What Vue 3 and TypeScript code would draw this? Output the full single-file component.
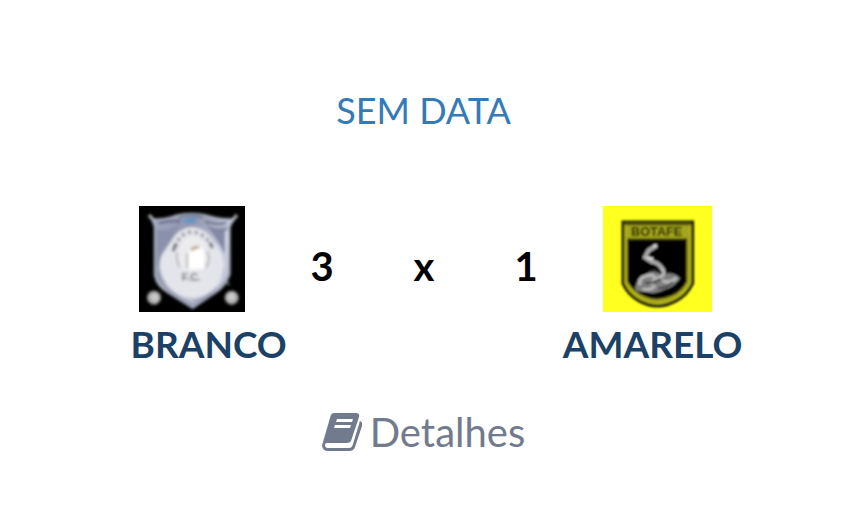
<script setup lang="ts">
interface Team {
  name: string
  goals: number
}

const date = 'SEM DATA'
const home: Team = { name: 'BRANCO', goals: 3 }
const away: Team = { name: 'AMARELO', goals: 1 }
</script>

<template>
  <main class="match">
    <h1 class="date">{{ date }}</h1>

    <section class="board">
      <svg class="crest-home" viewBox="27 25 318 318" role="img" :aria-label="home.name">
        <defs>
          <filter id="soft-home" x="-10%" y="-10%" width="120%" height="120%">
            <feGaussianBlur stdDeviation="4" />
          </filter>
          <linearGradient id="steel" x1="0" y1="0" x2="1" y2="1">
            <stop offset="0" stop-color="#a4aac2" />
            <stop offset="0.3" stop-color="#9297b0" />
            <stop offset="0.6" stop-color="#ccd0de" />
            <stop offset="1" stop-color="#777d9c" />
          </linearGradient>
        </defs>
        <rect x="27" y="25" width="318" height="318" fill="#000" />
        <g filter="url(#soft-home)">
          <path d="M57 52L84 84M321 52L294 84" stroke="#b4b4b4" stroke-width="10" />
          <path d="M80 255L96 240M278 240L298 262" stroke="#777" stroke-width="6" />
          <path d="M66 65Q110 66 140 53Q184 42 229 53Q265 66 311 64L299 88V230Q287 262 262 281L188 331L112 283Q80 264 74 232V86Z" fill="url(#steel)" stroke="#b4b9c9" stroke-width="5" />
          <path d="M80 95Q116 106 151 75Q119 131 91 168L80 205Z" fill="#8b90ab" />
          <path d="M222 78Q254 98 292 88L286 173Q256 111 222 78Z" fill="#8389a5" />
          <path d="M86 76Q130 66 151 72M225 72Q260 84 287 76" fill="none" stroke="#555f79" stroke-width="6" />
          <path d="M185 88Q145 92 126 127L96 171Q79 209 105 251Q133 296 186 302Q239 299 268 253Q291 209 276 169L247 127Q226 91 185 88Z" fill="#e4e5ea" />
          <path d="M288 99V225Q277 253 257 270" fill="none" stroke="#d4d8e3" stroke-width="6" />
          <path d="M83 226Q93 268 130 288L187 324L245 288" fill="none" stroke="#8a90a8" stroke-width="6" />
          <path d="M137 148Q145 111 178 104Q218 100 242 140" fill="none" stroke="#8b8e96" stroke-width="10" stroke-dasharray="9 11" />
          <path d="M129 161L138 137M239 134L248 151" stroke="#62676f" stroke-width="9" />
          <path d="M146 173Q147 122 186 116Q228 123 235 172L225 211Q187 233 151 208Z" fill="#ececee" />
          <path d="M176 213V176Q176 148 198 144Q224 146 222 174V213Z" fill="#fff" />
          <path d="M171 166V211M231 160Q244 184 228 211M142 164Q137 188 149 209" fill="none" stroke="#b8b9bd" stroke-width="6" />
          <path d="M184 158Q192 146 208 149" fill="none" stroke="#b9a987" stroke-width="9" />
          <text class="crest-text" x="184" y="251" font-size="32" text-anchor="middle" fill="#66686c">F.C.</text>
          <path d="M157 74Q168 55 202 62L190 76Z" fill="#5c95c4" />
          <path d="M145 60Q181 46 219 58" fill="none" stroke="#59677c" stroke-width="5" />
          <circle cx="72" cy="300" r="21" fill="#aaa" />
          <circle cx="305" cy="300" r="21" fill="#aaa" />
          <circle cx="74" cy="299" r="11" fill="#ccc" />
          <circle cx="304" cy="298" r="11" fill="#ccc" />
        </g>
      </svg>

      <div class="score">
        <span>{{ home.goals }}</span>
        <span>x</span>
        <span>{{ away.goals }}</span>
      </div>

      <svg class="crest-away" viewBox="27 25 327 318" role="img" :aria-label="away.name">
        <defs>
          <filter id="soft-away" x="-10%" y="-10%" width="120%" height="120%">
            <feGaussianBlur stdDeviation="3" />
          </filter>
        </defs>
        <rect x="27" y="25" width="327" height="318" fill="#ffff20" />
        <g filter="url(#soft-away)">
          <path d="M87 73H296V257Q279 292 247 309Q190 341 134 309Q101 290 87 257Z" fill="#b8b81a" stroke="#202008" stroke-width="9" />
          <path d="M98 82H286V253Q270 285 239 301Q190 326 143 301Q111 283 98 254Z" fill="#a3a51a" />
          <path d="M102 125H277V251Q263 280 232 293Q190 312 151 294Q118 280 102 251Z" fill="#000" stroke="#292908" stroke-width="5" />
          <path d="M94 78H290" stroke="#4a4b08" stroke-width="10" />
          <text class="crest-text" x="188" y="114" font-size="38" text-anchor="middle" fill="#141500">BOTAFE</text>
          <path d="M184 146L164 158L153 179L173 192Q194 194 207 217" fill="none" stroke="#a6a6a6" stroke-width="13" stroke-linecap="round" />
          <path d="M178 147L187 142M158 179L178 184" stroke="#ddd" stroke-width="7" />
          <path d="M155 231Q176 214 204 230Q238 219 259 242Q239 270 214 275Q178 295 151 280Q123 287 123 269L131 248Q139 235 155 231Z" fill="#7d7d7d" />
          <path d="M137 263Q134 239 157 235Q174 228 183 239M201 211Q219 226 199 239Q181 244 169 260M205 249Q226 259 249 240M145 276Q174 278 183 263" fill="none" stroke="#b4b4b4" stroke-width="11" />
          <path d="M154 255Q179 258 199 244M194 272Q221 271 236 253M166 221L191 217" fill="none" stroke="#343434" stroke-width="5" />
        </g>
      </svg>
    </section>

    <section class="names">
      <strong>{{ home.name }}</strong>
      <strong>{{ away.name }}</strong>
    </section>

    <a class="details" href="#detalhes">
      <svg class="book" viewBox="0 0 40 38" aria-hidden="true">
        <path fill="currentColor" fill-rule="evenodd" d="M12 0H34Q38 0 37 4L29 28Q28 30 25 30H5Q3 30 3 32Q3 35 6 35H27Q30 35 31 31L38 8Q41 9 40 13L33 34Q32 38 27 38H6Q1 38 0 33Q0 31 1 29L8 5Q9 0 12 0ZM15 6L14 9H30L31 6ZM13 12L12 15H28L29 12Z" />
      </svg>
      <span>Detalhes</span>
    </a>
  </main>
</template>

<style>
body {
  margin: 0;
  background: #fff;
}
</style>

<style scoped>
.match {
  display: flex;
  flex-direction: column;
  align-items: center;
  padding: 86px 0 54px;
  font-family: Lato, Carlito, Calibri, sans-serif;
  line-height: 48px;
}

.date {
  margin: 0;
  padding-right: 4px;
  font-size: 36px;
  font-weight: 400;
  color: #337ab7;
}

.board {
  display: flex;
  align-items: center;
  justify-content: center;
  gap: 26px;
  margin-top: 72px;
}

.crest-home {
  width: 106px;
  height: 106px;
}

.crest-away {
  width: 109px;
  height: 106px;
}

.crest-text {
  font-family: "Liberation Sans", sans-serif;
  font-weight: 700;
}

.score {
  display: grid;
  grid-template-columns: repeat(3, 102px);
  padding-top: 14px;
  text-align: center;
  font-size: 40px;
  font-weight: 700;
  color: #000;
}

.names {
  display: flex;
  justify-content: center;
  gap: 276px;
  margin-top: 8px;
  padding-left: 22px;
  font-size: 37px;
  color: #1c4166;
}

.details {
  display: flex;
  align-items: center;
  gap: 8px;
  margin-top: 40px;
  padding-right: 4px;
  font-size: 40px;
  color: #727b8e;
  text-decoration: none;
}

.book {
  width: 40px;
  height: 38px;
}
</style>
